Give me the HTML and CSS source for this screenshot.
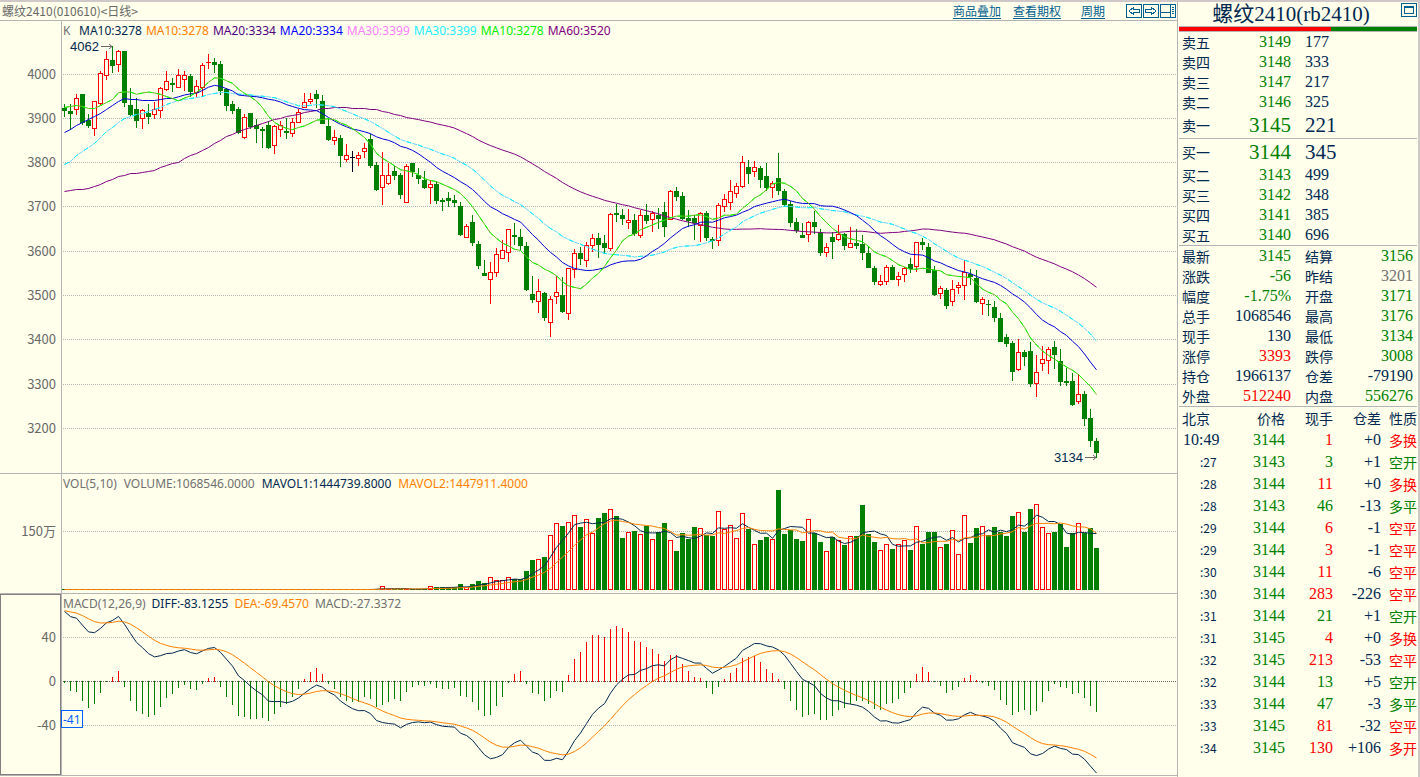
FILE: index.html
```html
<!DOCTYPE html>
<html lang="zh-CN">
<head>
<meta charset="utf-8">
<title>螺纹2410 日线</title>
<link rel="stylesheet" href="styles.css">
</head>
<body>
<div class="app">
  <main class="main">
    <header class="bar">
      <h1 class="bar-title">螺纹2410(010610)&lt;日线&gt;</h1>
      <nav class="links">
        <a href="#overlay">商品叠加</a>
        <a href="#options">查看期权</a>
        <a href="#period" class="period">周期</a>
      </nav>
      <div class="tools">
        <button class="tool" aria-label="向左"><svg width="16" height="14"><path d="M.5.5h15v13H.5zM7.500 3.500l-4.500 3.500 4.500 3.500v-2h6v-3h-6z"/></svg></button>
        <button class="tool" aria-label="向右"><svg width="16" height="14"><path d="M.5.5h15v13H.5zM8.500 3.500l4.500 3.500-4.500 3.500v-2h-6v-3h6z"/></svg></button>
        <button class="tool" aria-label="布局"><svg width="16" height="14"><path d="M.5.5h15v13H.5zM10.500.5v13M.5 8.500h10M12 3.500h2M12 5.500h2M12 7.500h2M12 9.500h2"/></svg></button>
      </div>
    </header>
    <section class="panel panel-k">
      <svg class="plot" id="plot-k" role="img" aria-label="K线"></svg>
      <p class="legend"><span class="grey key">K</span><span class="navy">MA10:3278</span><span class="orange">MA10:3278</span><span class="indigo">MA20:3334</span><span class="blue">MA20:3334</span><span class="pink">MA30:3399</span><span class="cyan">MA30:3399</span><span class="lime">MA10:3278</span><span class="purple">MA60:3520</span></p>
    </section>
    <section class="panel panel-vol">
      <svg class="plot" id="plot-vol" role="img" aria-label="成交量"></svg>
      <p class="legend"><span class="grey">VOL(5,10)</span><span class="grey">VOLUME:1068546.0000</span><span class="navy">MAVOL1:1444739.8000</span><span class="orange">MAVOL2:1447911.4000</span></p>
    </section>
    <section class="panel panel-macd">
      <svg class="plot" id="plot-macd" role="img" aria-label="MACD"></svg>
      <p class="legend"><span class="grey">MACD(12,26,9)</span><span class="navy">DIFF:-83.1255</span><span class="orange">DEA:-69.4570</span><span class="grey">MACD:-27.3372</span></p>
    </section>
  </main>
  <aside class="side">
    <div class="side-head">
      <h2 class="side-title">螺纹2410(rb2410)</h2>
      <button class="tool expand" aria-label="最大化"><svg width="16" height="14"><path d="M.5.5h15v13H.5zM3.500 3.500h9v7h-9zM3 4.500h10"/></svg></button>
    </div>
    <div class="ratio"><div class="ratio-buy"></div></div>
    <table class="book">
      <tr><th>卖五</th><td class="up">3149</td><td>177</td></tr>
      <tr><th>卖四</th><td class="up">3148</td><td>333</td></tr>
      <tr><th>卖三</th><td class="up">3147</td><td>217</td></tr>
      <tr><th>卖二</th><td class="up">3146</td><td>325</td></tr>
      <tr class="best"><th>卖一</th><td class="up">3145</td><td>221</td></tr>
    </table>
    <table class="book bids">
      <tr class="best"><th>买一</th><td class="up">3144</td><td>345</td></tr>
      <tr><th>买二</th><td class="up">3143</td><td>499</td></tr>
      <tr><th>买三</th><td class="up">3142</td><td>348</td></tr>
      <tr><th>买四</th><td class="up">3141</td><td>385</td></tr>
      <tr><th>买五</th><td class="up">3140</td><td>696</td></tr>
    </table>
    <table class="stats">
      <tr><th>最新</th><td class="green">3145</td><th>结算</th><td class="green">3156</td></tr>
      <tr><th>涨跌</th><td class="green">-56</td><th>昨结</th><td class="grey">3201</td></tr>
      <tr><th>幅度</th><td class="green">-1.75%</td><th>开盘</th><td class="green">3171</td></tr>
      <tr><th>总手</th><td>1068546</td><th>最高</th><td class="green">3176</td></tr>
      <tr><th>现手</th><td>130</td><th>最低</th><td class="green">3134</td></tr>
      <tr><th>涨停</th><td class="red">3393</td><th>跌停</th><td class="green">3008</td></tr>
      <tr><th>持仓</th><td>1966137</td><th>仓差</th><td>-79190</td></tr>
      <tr><th>外盘</th><td class="red">512240</td><th>内盘</th><td class="green">556276</td></tr>
    </table>
    <table class="ticks">
      <thead><tr><th>北京</th><th>价格</th><th>现手</th><th>仓差</th><th>性质</th></tr></thead>
      <tbody id="ticks"></tbody>
    </table>
  </aside>
</div>
<script src="chart.js"></script>
</body>
</html>
```
FILE: styles.css
```css
* { box-sizing: border-box; }
body {
  margin: 0;
  background: #ffffeb;
  color: #002850;
  font-family: "Noto Sans CJK SC", sans-serif;
  font-size: 12px;
}
h1, h2, p { margin: 0; font-weight: normal; }
button { margin: 0; padding: 0; border: 0; background: none; }
table { border-collapse: collapse; }

.app {
  display: flex;
  min-height: 100vh;
  border-top: 2px solid #d0c8c8;
  border-right: 2px solid #d0c8c8;
}
.main { flex: 1; min-width: 0; display: flex; flex-direction: column; padding-bottom: 1px; }

.bar {
  display: flex;
  align-items: center;
  height: 19px;
  padding-left: 2px;
  border-bottom: 1px solid #b4b4b4;
}
.bar-title { flex: 1; font-size: 12px; line-height: 18px; color: #686868; }
.links { display: flex; gap: 12px; line-height: 18px; }
.links a { color: #006090; text-decoration: underline; text-underline-offset: 2px; }
.links .period { margin-left: 8px; }
.tools { display: flex; gap: 1px; margin-left: 21px; margin-right: 1px; }
.tool { display: block; height: 14px; line-height: 0; }
.tool path { fill: none; stroke: #006090; shape-rendering: crispEdges; }

.panel { position: relative; min-height: 0; border-bottom: 1px solid #b4b4b4; overflow: hidden; }
.panel-k { flex: 453 1 453px; }
.panel-vol { flex: 120 1 120px; }
.panel-macd { flex: 182 1 182px; }
.plot { display: block; width: 100%; height: 100%; }
.legend {
  position: absolute;
  left: 63px;
  top: 2px;
  display: flex;
  gap: 4px;
  font: 12px/16px "Noto Sans", sans-serif;
  white-space: nowrap;
}
.key { width: 12px; }
.panel-vol .legend { gap: 7px; }
.panel-macd .legend { gap: 6px; }

.grey { color: #707070; }
.navy { color: #002850; }
.orange { color: #ff8000; }
.indigo { color: #500080; }
.blue { color: #0000ff; }
.pink { color: #ff80ff; }
.cyan { color: #22eeff; }
.lime { color: #00f000; }
.purple { color: #800080; }
.green { color: #008000; }
.red { color: #ff0000; }

.axis { fill: #686868; font: 13px "Noto Sans CJK SC", sans-serif; text-anchor: end; }
.note { fill: #002850; font: 13px "Liberation Sans", sans-serif; text-anchor: end; }
.arrow { fill: none; stroke: #686868; }
.grid { stroke: #b4b4b4; stroke-dasharray: 1 1; shape-rendering: crispEdges; }
.grid-zero { stroke: #606060; }
.frame { fill: none; stroke: #b4b4b4; shape-rendering: crispEdges; }
.selected { fill: none; stroke: #808080; shape-rendering: crispEdges; }
.rise { fill: #ffffeb; stroke: #ff0000; shape-rendering: crispEdges; }
.rise-bar { fill: #ff0000; shape-rendering: crispEdges; }
.fall { fill: #008000; shape-rendering: crispEdges; }
.flat { fill: #000020; shape-rendering: crispEdges; }
.line { fill: none; stroke-width: 1; }
.l-navy { stroke: #002850; }
.l-orange { stroke: #ff8000; }
.l-blue { stroke: #0000d8; }
.l-purple { stroke: #800080; }
.l-green { stroke: #5cbc14; }
.l-lime { stroke: #00ff00; stroke-dasharray: 4 5; }
.l-sky { stroke: #66d4ff; stroke-dasharray: 5 1; }
.l-cyan { stroke: #00f0ff; stroke-dasharray: 5 7; }
.cursor-box { fill: #ffffeb; stroke: #0060ff; shape-rendering: crispEdges; }
.cursor-text { fill: #0060ff; font: 12px "Noto Sans", sans-serif; }

.side { width: 241px; flex: none; border-left: 1px solid #b4b4b4; padding: 0 1px; }
.side-head {
  display: flex;
  height: 25px;
  border-bottom: 1px solid #b4b4b4;
}
.side-title {
  flex: 1;
  padding-left: 2px;
  font: 21px/24px "Liberation Serif", "Noto Sans CJK SC", serif;
  text-align: center;
}
.expand { margin-top: 1px; }
.ratio { height: 4px; background: #008000; }
.ratio-buy { width: 64%; height: 4px; background: #ff0000; }

.side table { width: 100%; table-layout: fixed; }
.side th {
  padding: 0;
  font: 14px/20px "Noto Sans CJK SC", sans-serif;
  text-align: left;
  vertical-align: middle;
}
.side td {
  padding: 0;
  font: 16px/20px "Liberation Serif", serif;
  text-align: right;
  vertical-align: middle;
}
.book, .stats, .ticks { border-top: 1px solid #b4b4b4; }
.side tr { height: 20px; }
.side th:first-child { padding-left: 3px; width: 44px; }
.book td:nth-child(2) { width: 68px; }
.side .book td:nth-child(3) { text-align: left; padding-left: 14px; }
.side .best { height: 26px; }
.side .best td { font-size: 21px; line-height: 24px; }
.up { color: #008000; }

.stats td:nth-child(2) { width: 68px; }
.side .stats th:nth-child(3) { width: 54px; padding-left: 14px; }
.side .stats td:nth-child(4) { padding-right: 4px; }

.side .ticks th { text-align: right; }
.side .ticks th:first-child { text-align: left; width: 46px; }
.ticks th:nth-child(2) { width: 60px; }
.ticks th:nth-child(3), .ticks th:nth-child(4) { width: 48px; }
.side .ticks thead tr { height: 23px; }
.side .ticks tbody tr { height: 22px; }
.side .ticks td:first-child { padding-left: 4px; text-align: left; white-space: nowrap; }
.side .ticks td.sec { padding-left: 21px; font: 12px/20px "Noto Sans CJK SC", sans-serif; }
.side .ticks td:last-child { font: 14px/20px "Noto Sans CJK SC", sans-serif; }
```
FILE: chart.js
```js
// One candle per entry: kind (r rise, g fall, k flat), high, body top, body bottom, low.
// Levels are plot rows: 4000 sits on row 74 and 100 points span 44 rows.
const candles = `g104,108,111,117 g104,111,114,130 r94,98,109,115 g94,94,123,125 g114,120,126,128 r101,101,128,136 r71,73,103,105 r51,59,75,80 g46,60,66,73 r50,51,64,72
g51,51,103,107 g88,105,115,116 g98,109,121,128 r109,110,118,129 g104,113,117,124 r102,109,114,119 r87,88,110,118 r71,81,89,91 g78,83,85,92 r69,75,87,87
r71,75,79,91 g74,76,92,97 r80,86,92,97 r63,65,87,97 r54,62,62,69 g58,62,65,73 g61,64,91,95 g88,89,106,111 g101,104,111,114 g107,109,133,134
r114,117,137,139 g113,113,127,129 g119,125,129,143 g127,129,131,148 g121,125,148,149 r125,126,145,154 r121,125,129,137 g118,131,133,139 r118,122,133,137 r109,112,122,123
r93,102,107,108 r93,99,101,104 g90,94,99,108 g95,101,124,124 g119,126,140,141 r130,137,140,145 g135,138,156,167 r144,155,159,162 k151,157,157,172 r152,155,158,166
r143,148,151,158 g134,139,166,168 g162,165,190,191 r152,175,187,205 r163,175,183,185 g166,171,176,180 g173,175,195,199 r164,166,202,203 g163,163,172,177 g168,175,179,184
g171,180,188,189 r180,184,187,204 g181,184,201,204 g198,200,202,211 g192,198,201,207 g195,200,203,207 g202,206,235,236 r224,226,237,238 g215,222,243,246 g241,244,266,269
g260,273,276,276 r262,272,279,304 r248,254,272,277 r240,250,258,259 r229,229,252,262 g223,235,237,245 g229,237,246,250 g242,246,290,291 g276,294,300,303 r279,291,301,313
g292,293,318,321 r296,299,322,337 r276,292,296,304 g277,295,312,313 r268,268,313,320 r249,253,269,278 g247,253,259,265 r242,245,260,267 r234,238,245,252 g233,238,245,258
g235,243,248,254 r213,214,248,251 g204,213,215,222 g209,215,219,225 r209,220,222,229 g214,220,234,236 r210,215,235,238 g204,215,221,224 r211,213,219,232 g208,215,219,229
g202,212,227,237 r190,191,219,219 g187,191,197,201 g192,196,219,220 g210,218,221,227 g215,218,223,240 r212,213,225,242 g211,213,238,241 g237,239,241,249 r203,205,240,246
r194,199,206,212 r180,191,202,210 r183,186,193,198 r156,162,186,188 g160,167,174,184 r161,167,171,177 g166,168,180,188 g163,176,188,191 r181,183,187,198 g153,178,191,195
g189,191,205,207 g201,204,223,227 g218,222,231,233 g223,235,238,238 r221,222,234,242 g211,222,227,234 g229,233,253,256 r243,247,252,257 g232,237,242,259 r225,234,239,241
g233,234,246,250 r227,243,247,248 g229,243,246,249 g235,244,253,260 g246,253,268,268 g266,268,282,285 r275,281,284,286 r265,267,281,285 g265,267,280,280 r272,276,279,286
r267,268,274,282 g258,264,269,273 r242,242,266,272 g238,242,245,250 g243,247,273,273 g266,270,295,296 r286,288,293,299 g288,290,306,309 r280,289,301,306 r282,285,287,294
r260,272,285,300 g269,274,277,285 g270,278,302,303 r297,299,303,315 g300,304,305,316 g301,307,318,322 g313,318,342,342 g334,337,344,347 g341,343,372,381 r339,352,369,371
g350,352,357,366 g342,351,384,387 r355,372,383,397 r346,359,363,371 r347,349,360,374 g341,347,355,369 g349,361,382,386 g368,381,383,386 g373,381,405,406 r374,394,401,404
g391,394,419,426 g409,418,441,447 g438,441,453,458`.split(/\s+/).map(s => {
  const [high, top, bottom, low] = s.slice(1).split(",").map(Number);
  return { kind: s[0], high, top, bottom, low };
});

// Row of the top of each volume bar; bars stand on row 590.
const volume = [];
for (let i = 0; i < 52; i++) volume.push(589);
volume.push(588, 586, 589, 589, 588, 588, 589, 589, 588, 586, 587, 587, 587, 587, 584, 587, 584, 581,
  583, 577, 580, 580, 577, 579, 579, 571, 560, 559, 557, 535, 523, 526, 522, 515, 527, 519, 533, 518,
  513, 509, 516, 538, 532, 531, 534, 526, 539, 532, 523, 540, 551, 533, 539, 527, 528, 535, 536, 511,
  529, 525, 538, 513, 529, 544, 540, 537, 539, 490, 534, 530, 539, 541, 519, 533, 542, 551, 537, 540,
  545, 536, 536, 505, 534, 542, 550, 544, 549, 544, 540, 550, 526, 544, 532, 532, 547, 544, 530, 554,
  515, 543, 528, 526, 535, 527, 532, 536, 516, 512, 532, 509, 504, 527, 533, 532, 524, 547, 533, 523,
  533, 528, 548);

// Averages for the days whose window starts before the first candle.
const head10 = [107, 106, 105, 106, 108, 108, 105, 102, 99];
const head20 = [132, 129, 125, 122, 119, 116, 113, 109, 105, 101, 98, 99, 99, 100, 100, 100, 99, 98, 98];
const head30 = [164, 161, 155, 151, 147, 143, 137, 131, 127, 122, 118, 116, 114, 113, 111, 109, 107,
  104, 102, 100, 99, 98, 97, 96, 94, 93, 92, 92, 93];
const head60 = [191, 190, 189, 189, 188, 186, 184, 181, 179, 176, 175, 173, 173, 172, 171, 170, 167,
  165, 163, 162, 158, 155, 153, 150, 147, 143, 140, 136, 134, 131, 129, 127, 125, 123, 121, 119, 118,
  116, 115, 114, 112, 111, 110, 108, 108, 107, 107, 107, 108, 108, 108, 109, 109, 111, 112, 114, 115,
  117, 118];

const closes = candles.map(c => (c.kind === "g" ? c.bottom : c.top));
const x = i => 64 + 6 * i;

function average(values, n, head) {
  return values.map((_, i) => {
    if (i < n - 1) return head ? head[i] : values[i];
    let sum = 0;
    for (let j = i - n + 1; j <= i; j++) sum += values[j];
    return sum / n;
  });
}
const line = (rows, cls) =>
  `<polyline class="line ${cls}" points="${rows.map((r, i) => `${x(i) + 0.5},${(r + 0.5).toFixed(1)}`).join(" ")}"/>`;
const rect = (cls, left, top, w, h) => `<rect class="${cls}" x="${left}" y="${top}" width="${w}" height="${h}"/>`;
const hollow = (i, top, bottom) => rect("rise", x(i) - 1.5, top + 0.5, 4, Math.max(bottom - top, 0));
const grid = (row, cls = "") => `<line class="grid ${cls}" x1="63" x2="100%" y1="${row + 0.5}" y2="${row + 0.5}"/>`;
const label = (row, text) => `<text class="axis" x="56" y="${row + 5}">${text}</text>`;
const mount = (id, top, parts) => {
  document.getElementById(id).innerHTML = `<g transform="translate(0 ${-top})">${parts.join("")}</g>`;
};
const axisLine = '<line class="frame" x1="61.5" x2="61.5" y1="0" y2="777"/>';

// Price
const price = [];
[74, 118, 162, 206, 251, 295, 339, 384, 428].forEach((row, i) => price.push(grid(row), label(row, 4000 - 100 * i)));
candles.forEach((c, i) => {
  const fill = { r: "rise-bar", g: "fall", k: "flat" }[c.kind];
  price.push(rect(fill, x(i), c.high, 1, c.low - c.high));
  if (c.kind === "g") price.push(rect(fill, x(i) - 2, c.top, 5, Math.max(c.bottom - c.top, 1)));
  else if (c.bottom === c.top) price.push(rect(fill, x(i) - 2, c.top, 5, 1));
  else price.push(hollow(i, c.top, c.bottom));
});
const ma10 = average(closes, 10, head10);
const ma30 = average(closes, 30, head30);
price.push(
  line(average(closes, 60, head60), "l-purple"),
  line(ma30, "l-sky"), line(ma30, "l-cyan"),
  line(average(closes, 20, head20), "l-blue"),
  line(ma10, "l-green"), line(ma10, "l-lime"),
  '<text class="note" x="99" y="51">4062</text><path class="arrow" d="M101 46.500h11M109 44l3 2.500-3 2.500"/>',
  '<text class="note" x="1083" y="462">3134</text><path class="arrow" d="M1085 457.500h11M1093 455l3 2.500-3 2.500"/>',
  axisLine);
mount("plot-k", 21, price);

// Volume
const vol = [grid(531), label(531, "150万")];
volume.forEach((top, i) => {
  const fall = candles[i].kind === "g";
  if (top > 587) vol.push(rect(fall ? "fall" : "rise-bar", x(i) - 2, 589, 5, 1));
  else vol.push(fall ? rect("fall", x(i) - 2, top, 5, 590 - top) : hollow(i, top, 589));
});
vol.push(line(average(volume, 5), "l-navy"), line(average(volume, 10), "l-orange"), axisLine);
mount("plot-vol", 474, vol);

// MACD, seeded with the averages of the day before the first candle.
const scale = 2.486;
let fast = -114, slow = -142.2, signal = 70.8;
const diff = [], dea = [], hist = [];
closes.forEach((row, i) => {
  if (i > 0) {
    fast += (-row - fast) * 2 / 13;
    slow += (-row - slow) * 2 / 27;
  }
  const d = (fast - slow) * scale;
  if (i > 0) signal += (d - signal) / 5;
  diff.push(681 - d);
  dea.push(681 - signal);
  hist.push(Math.round(2 * (d - signal)));
});
const macd = [grid(637), grid(681, "grid-zero"), grid(725), label(637, 40), label(681, 0), label(725, "-40")];
hist.forEach((h, i) => {
  if (h > 0) macd.push(rect("rise-bar", x(i), 681 - h, 1, h + 1));
  else macd.push(rect("fall", x(i), 681, 1, 1 - h));
});
macd.push(line(diff, "l-navy"), line(dea, "l-orange"), axisLine,
  rect("selected", 0.5, 594.5, 60, 180),
  rect("cursor-box", 61.5, 710.5, 21, 17),
  '<text class="cursor-text" x="63" y="724">-41</text>');
mount("plot-macd", 594, macd);

// Trades: time, price, lots, lot colour, position change, nature, nature colour.
document.getElementById("ticks").innerHTML = `10:49 3144 1 red +0 多换 red
:27 3143 3 green +1 空开 green
:28 3144 11 red +0 多换 red
:28 3143 46 green -13 多平 green
:29 3144 6 red -1 空平 red
:29 3144 3 red -1 空平 red
:30 3144 11 red -6 空平 red
:30 3144 283 red -226 空平 red
:31 3144 21 green +1 空开 green
:31 3145 4 red +0 多换 red
:32 3145 213 red -53 空平 red
:32 3144 13 green +5 空开 green
:33 3144 47 green -3 多平 green
:33 3145 81 red -32 空平 red
:34 3145 130 red +106 多开 red`.split("\n").map(row => {
  const [time, p, lots, c1, change, nature, c2] = row.split(" ");
  return `<tr><td class="${time[0] === ":" ? "sec" : ""}">${time}</td><td class="green">${p}</td>` +
    `<td class="${c1}">${lots}</td><td>${change}</td><td class="${c2}">${nature}</td></tr>`;
}).join("");
```
